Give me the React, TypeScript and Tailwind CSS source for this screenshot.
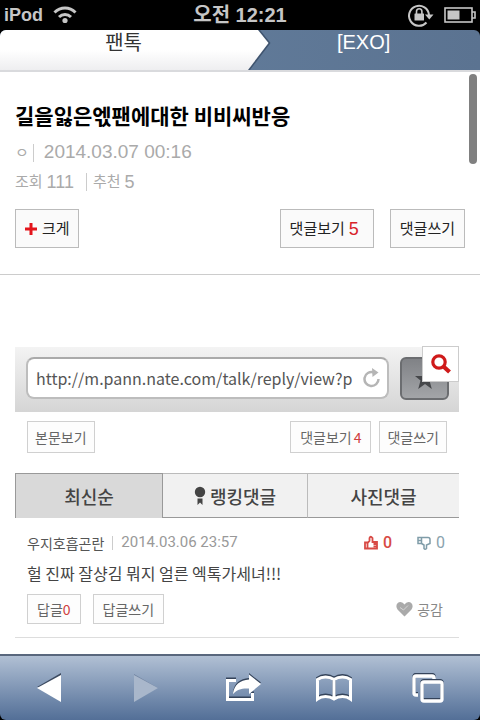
import React from "react";

const tools = [
  {
    id: "back",
    label: "Back",
    icon: (
      <svg viewBox="0 0 24 30" className="h-[30px] w-6">
        <path d="M0 14L24 0v14z" fill="#3c4a60" />
        <path d="M0 15L24 2v27z" fill="#fff" />
      </svg>
    ),
  },
  {
    id: "forward",
    label: "Forward",
    icon: (
      <svg viewBox="0 0 24 30" className="h-[30px] w-6">
        <path d="M0 1L24 15H0z" fill="#7285a1" />
        <path d="M0 2L24 15L0 29z" fill="#a9b7cb" />
      </svg>
    ),
  },
  {
    id: "share",
    label: "Share",
    icon: (
      <svg viewBox="0 0 36 30" className="h-[30px] w-9">
        <g fill="#34435a" transform="translate(0 -1.4)">
          <path d="M0 6h10v3H3v16h22v-5h3v8H0z" />
          <path d="M23 1.500L35 11L23 21v-5.500C16 15 11 16.500 7 21C8 12 14 7 23 6.500z" />
        </g>
        <g fill="#fff">
          <path d="M0 6h10v3H3v16h22v-5h3v8H0z" />
          <path d="M23 1.500L35 11L23 21v-5.500C16 15 11 16.500 7 21C8 12 14 7 23 6.500z" />
        </g>
      </svg>
    ),
  },
  {
    id: "bookmarks",
    label: "Bookmarks",
    icon: (
      <svg viewBox="0 0 38 30" className="h-[30px] w-[38px]" fill="none" strokeWidth="3">
        <path
          d="M2.500 26V6.500C7 3 14 3 19 6.500C24 3 31 3 35.500 6.500V26C31 22.500 24 22.500 19 26C14 22.500 7 22.500 2.500 26zM19 6.500V26"
          stroke="#34435a"
          transform="translate(0 -1.300)"
        />
        <path
          d="M2.500 26V6.500C7 3 14 3 19 6.500C24 3 31 3 35.500 6.500V26C31 22.500 24 22.500 19 26C14 22.500 7 22.500 2.500 26zM19 6.500V26"
          stroke="#fff"
        />
      </svg>
    ),
  },
  {
    id: "pages",
    label: "Pages",
    icon: (
      <svg viewBox="0 0 32 30" className="h-[30px] w-8" fill="none" strokeWidth="3.4">
        <g stroke="#34435a" transform="translate(0 -1.4)">
          <path d="M6 22H4Q2 22 2 20V5Q2 3 4 3H20Q22 3 22 5V6" />
          <rect x="10" y="9" width="20" height="19" rx="2" />
        </g>
        <g stroke="#fff">
          <path d="M6 22H4Q2 22 2 20V5Q2 3 4 3H20Q22 3 22 5V6" />
          <rect x="10" y="9" width="20" height="19" rx="2" />
        </g>
      </svg>
    ),
  },
];

function StatusBar() {
  return (
    <div className="grid h-[30px] shrink-0 grid-cols-3 items-center bg-black px-1 font-['Liberation_Sans','Noto_Sans_CJK_KR',sans-serif] font-bold text-[#c6c6c6]">
      <div className="flex items-center gap-2.5">
        <span className="text-lg leading-7">iPod</span>
        <svg viewBox="0 0 24 18" className="h-[18px] w-6" fill="none" stroke="#c6c6c6">
          <path d="M1.500 6.500C7.500 0.500 16.500 0.500 22.500 6.500" strokeWidth="3" />
          <path d="M6 11C9.500 7.600 14.500 7.600 18 11" strokeWidth="3" />
          <circle cx="12" cy="14.500" r="2.600" fill="#c6c6c6" stroke="none" />
        </svg>
      </div>
      <div className="text-center text-xl leading-7 whitespace-nowrap">
        오전 12:21
      </div>
      <div className="flex items-center justify-end gap-2.5">
        <svg viewBox="0 0 26 24" className="h-6 w-[26px]">
          <path
            d="M18.500 19.500A10 10 0 1 1 21 12"
            fill="none"
            stroke="#c6c6c6"
            strokeWidth="2"
          />
          <path d="M17 11.500h8.500l-4.200 5z" fill="#c6c6c6" />
          <rect x="6.500" y="10.500" width="9.500" height="7" rx="0.500" fill="#c6c6c6" />
          <path d="M8.500 11V8.500a2.700 2.700 0 0 1 5.400 0V11" fill="none" stroke="#c6c6c6" strokeWidth="1.600" />
        </svg>
        <svg viewBox="0 0 32 16" className="h-4 w-8">
          <rect x="1" y="1" width="27" height="14" fill="none" stroke="#c6c6c6" strokeWidth="1.600" />
          <rect x="3.500" y="3.500" width="12" height="9" fill="#c6c6c6" />
          <path d="M28 5h3v6h-3" fill="none" stroke="#c6c6c6" strokeWidth="1.600" />
        </svg>
      </div>
    </div>
  );
}

function Breadcrumb() {
  return (
    <nav className="flex h-[42px] shrink-0 rounded-t-md border-b-2 border-[#d9dadd] bg-gradient-to-r from-[#65809f] to-[#5b7391] text-xl leading-6 whitespace-nowrap">
      <a
        href="#talk"
        className="w-[51.5%] rounded-tl-md bg-gradient-to-b from-white from-50% to-[#eeeef0] text-center text-[#333]"
      >
        팬톡
      </a>
      <svg viewBox="0 0 24 40" className="h-10 w-6 shrink-0">
        <defs>
          <linearGradient id="arrow" x1="0" y1="0" x2="0" y2="1">
            <stop offset="0.5" stopColor="#fff" />
            <stop offset="1" stopColor="#eeeef0" />
          </linearGradient>
        </defs>
        <path d="M13 0L23.500 13L3 40H0V0z" fill="#3f546f" />
        <path d="M11 0L21.500 13L1 40H0V0z" fill="url(#arrow)" />
      </svg>
      <a
        href="#exo"
        className="flex-1 pr-6 text-center font-['Liberation_Sans',sans-serif] text-white"
      >
        [EXO]
      </a>
    </nav>
  );
}

function ArticleHeader() {
  const button =
    "flex h-[39px] items-center border border-[#bbb] bg-[#fafafa] text-base whitespace-nowrap text-[#222]";
  return (
    <header className="border-b border-[#ccc] px-[15px] pt-7 pb-[26px]">
      <h1 className="text-[21px] leading-[30px] font-bold text-black">
        길을잃은엓팬에대한 비비씨반응
      </h1>
      <div className="mt-2 text-[15px] text-[#aaa]">
        <p className="flex h-[29px] items-center">
          <span>ㅇ</span>
          <span className="mr-2.5 ml-1 h-[18px] w-px bg-[#ccc]" />
          <time className="font-['Liberation_Sans',sans-serif] text-[19px]">
            2014.03.07 00:16
          </time>
        </p>
        <p className="flex h-[29px] items-center">
          <span>조회</span>
          <span className="ml-1 font-['Liberation_Sans',sans-serif] text-lg">111</span>
          <span className="mr-1.5 ml-3 h-[18px] w-px bg-[#ccc]" />
          <span>추천</span>
          <span className="ml-1 font-['Liberation_Sans',sans-serif] text-lg">5</span>
        </p>
      </div>
      <div className="mt-[13px] flex gap-4">
        <button className={`${button} mr-auto gap-1 px-2`}>
          <svg viewBox="0 0 14 14" className="h-3.5 w-3.5">
            <path d="M7 1v12M1 7h12" stroke="#e3141b" strokeWidth="3" />
          </svg>
          <span className="text-[15px]">크게</span>
        </button>
        <button className={`${button} gap-1 pr-3.5 pl-[9px]`}>
          <span className="text-[15px]">댓글보기</span>
          <span className="font-['Liberation_Sans',sans-serif] text-lg text-[#d8232a]">5</span>
        </button>
        <button className={`${button} px-[9px]`}>
          <span className="text-[15px]">댓글쓰기</span>
        </button>
      </div>
    </header>
  );
}

function AddressBar() {
  return (
    <div className="relative flex h-[65px] items-start gap-[11px] bg-gradient-to-b from-[#f3f3f3] to-[#d5d5d5] pt-2.5 pr-2.5 pl-[11px]">
      <div className="flex h-[42px] min-w-0 flex-1 items-center rounded-lg border-2 border-[#bdbdbd] border-t-[#aaa] bg-white pr-1.5 pl-2">
        <input
          aria-label="Address"
          readOnly
          defaultValue="http://m.pann.nate.com/talk/reply/view?p"
          className="h-8 min-w-0 flex-1 bg-transparent text-base text-[#555] outline-none"
        />
        <svg viewBox="0 0 18 20" className="ml-1 h-5 w-[18px] shrink-0">
          <path d="M15.500 11a7 7 0 1 1-5-6.700" fill="none" stroke="#b5b5b5" strokeWidth="2.500" />
          <path d="M9 0l6.500 4.500L9.500 9z" fill="#b5b5b5" />
        </svg>
      </div>
      <button
        aria-label="Bookmark"
        className="flex h-[43px] w-[49px] shrink-0 items-center justify-center rounded-md border-2 border-[#6b6d70] bg-gradient-to-b from-[#808286] to-[#a3a5a8]"
      >
        <svg viewBox="0 0 20 20" className="h-5 w-5">
          <path d="M10 0l3 7h7l-5.500 4.600L16.800 20 10 15l-6.800 5 2.300-8.400L0 7h7z" fill="#45474a" />
        </svg>
      </button>
      <button
        aria-label="Zoom"
        className="absolute -top-px right-0 flex h-9 w-[37px] items-center justify-center border border-[#ccc] bg-white"
      >
        <svg viewBox="0 0 20 20" className="h-5 w-5" fill="none" stroke="#cf1a1a">
          <circle cx="8" cy="8" r="6.200" strokeWidth="3.200" />
          <path d="M12.500 12.500L18.500 18" strokeWidth="4.200" />
        </svg>
      </button>
    </div>
  );
}

function ReplyCapture() {
  const small =
    "flex items-center border border-[#d0d0d0] bg-[#fdfdfd] text-sm whitespace-nowrap text-[#666]";
  return (
    <section className="mt-[72px] mr-[21px] ml-[15px]">
      <AddressBar />
      <div className="mt-[9px] flex gap-2 px-3">
        <button className={`${small} mr-auto h-8 px-[7px]`}>본문보기</button>
        <button className={`${small} h-8 gap-0.5 px-[9px]`}>
          댓글보기<span className="text-[#cf4040]">4</span>
        </button>
        <button className={`${small} h-8 px-[7px]`}>댓글쓰기</button>
      </div>

      <div className="mt-5 grid h-[45px] grid-cols-[148fr_144fr_152fr] text-lg font-medium text-[#444]">
        <button className="border border-b-0 border-[#999] bg-[#d9d9d9]">최신순</button>
        <button className="flex items-center justify-center gap-1 border-t border-b border-[#999] border-t-[#bbb] bg-[#f1f1f1]">
          <svg viewBox="0 0 12 20" className="h-5 w-3" fill="#444">
            <circle cx="6" cy="6" r="5.200" />
            <path d="M3.500 12.500h5V19L6 16.500L3.500 19z" />
          </svg>
          랭킹댓글
        </button>
        <button className="border-t border-b border-l border-[#bbb] border-b-[#999] bg-[#f1f1f1]">
          사진댓글
        </button>
      </div>

      <article className="border-b border-[#ddd] px-3 pt-2.5 pb-[13px]">
        <div className="flex h-[30px] items-center text-sm text-[#555]">
          <span>우지호흡곤란</span>
          <span className="mx-2 h-3.5 w-px bg-[#ccc]" />
          <time className="mr-auto font-[Roboto,sans-serif] text-[15px] text-[#999]">
            2014.03.06 23:57
          </time>
          <button className="flex items-center gap-1 font-[Roboto,sans-serif] text-base font-medium text-[#d84a45]">
            <svg viewBox="0 0 16 16" className="h-4 w-4" fill="none" stroke="#d84a45" strokeWidth="1.800">
              <path d="M2 7.500h2.500v6H2zM4.500 8L6.500 6V3Q7.500 0.500 9.500 3v4h4.500v6.500H4.500" />
              <path d="M10.500 9h3.500M10.500 11.500h3.500" />
            </svg>
            0
          </button>
          <button className="mr-0.5 ml-6 flex items-center gap-1 font-[Roboto,sans-serif] text-base text-[#8aa3ae]">
            <svg viewBox="0 0 16 16" className="h-4 w-4" fill="none" stroke="#7f9ca8" strokeWidth="1.500">
              <path d="M2 2.500h3.500v6H2zM2 5.500h3.500M5.500 2.500H12q2 0 2 2V8.500l-3.500 1.500v3.500q-1.500 1.500-2.500 0V10L5.500 8.500" />
            </svg>
            0
          </button>
        </div>
        <p className="flex h-[30px] items-center text-base whitespace-nowrap text-[#444]">
          헐 진짜 잘샹김 뭐지 얼른 엑톡가세녀!!!
        </p>
        <div className="mt-1.5 flex items-center gap-3">
          <button className={`${small} h-[30px] px-[9px]`}>
            답글<span className="text-[#cf4040]">0</span>
          </button>
          <button className={`${small} h-[30px] px-[9px]`}>답글쓰기</button>
          <button className="ml-auto flex items-center gap-1 pr-1 text-sm text-[#888]">
            <svg viewBox="0 0 17 16" className="h-4 w-[17px]">
              <path
                d="M8.500 15.500L1.500 8.500C-1 5 1 1 4.500 1Q7 1 8.500 3.500Q10 1 12.500 1C16 1 18 5 15.500 8.500z"
                fill="#aaa"
              />
              <path d="M4 6.500L7.500 9L12 4.500" fill="none" stroke="#d5d5d5" />
            </svg>
            공감
          </button>
        </div>
      </article>
    </section>
  );
}

export default function App() {
  return (
    <div className="flex h-screen flex-col overflow-hidden bg-black font-['Noto_Sans_CJK_KR',sans-serif]">
      <StatusBar />
      <Breadcrumb />
      <main className="relative min-h-0 flex-1 overflow-hidden bg-white">
        <ArticleHeader />
        <ReplyCapture />
        <div className="absolute top-0.5 right-[3px] h-[90px] w-2 rounded-full bg-[#808080]" />
      </main>
      <footer className="grid h-[66px] shrink-0 grid-cols-[97fr_97fr_99fr_82fr_105fr] rounded-b-md border-t-2 border-[#59677d] bg-gradient-to-b from-[#b1c0d4] to-[#536f97]">
        {tools.map((tool) => (
          <button
            key={tool.id}
            aria-label={tool.label}
            className="flex items-center justify-center"
          >
            {tool.icon}
          </button>
        ))}
      </footer>
    </div>
  );
}
